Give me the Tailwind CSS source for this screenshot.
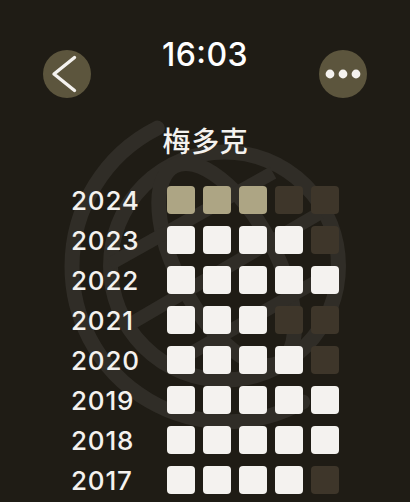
<!DOCTYPE html>
<html lang="zh-CN">

<head>
    <meta charset="UTF-8">
    <meta name="viewport" content="width=device-width, initial-scale=1.0">
    <title>梅多克</title>
    <script src="https://cdn.jsdelivr.net/npm/@tailwindcss/browser@4"></script>
</head>

<body class="bg-[#1f1c15]">
    <div class="relative h-[502px] w-[410px] overflow-hidden bg-[#1f1c15] font-[Inter,'Noto_Sans_CJK_SC',sans-serif] text-[#f4f2ef]">
        <!-- globe watermark -->
        <svg class="absolute inset-0" width="410" height="502" viewBox="0 0 410 502" fill="none" stroke="#302d27" stroke-width="15" stroke-linecap="round">
            <circle cx="224.5" cy="266" r="114" />
            <path d="M157.3 128.1A155 155 0 0 0 72 266.5A155 155 0 0 0 302.7 402" />
            <ellipse cx="226.7" cy="264.5" rx="49" ry="111.5" transform="rotate(-28 226.7 264.5)" />
            <path d="M110 264L273 172.6M131 323.6L320 213M165 368L332 272.5" stroke-width="13.3" stroke-linecap="butt" />
        </svg>

        <header class="relative flex justify-between px-[43px] pt-[50px]">
            <button class="size-12 rounded-full bg-[#5c553d]" aria-label="返回">
                <svg class="size-12" viewBox="0 0 48 48" fill="none" stroke="#f4f2ef" stroke-width="3.4" stroke-linecap="round" stroke-linejoin="round">
                    <path d="M31.5 7.5L11 24L31.5 40.5" />
                </svg>
            </button>
            <time class="-mt-3.5 text-[32px] leading-[38px] font-medium tracking-[0.4px] text-white">16<span class="inline-block -translate-y-[3px]">:</span>03</time>
            <button class="size-12 rounded-full bg-[#5c553d]" aria-label="更多">
                <svg class="size-12" viewBox="0 0 48 48" fill="#f4f2ef">
                    <circle cx="11" cy="24" r="4.4" />
                    <circle cx="24" cy="24" r="4.4" />
                    <circle cx="37" cy="24" r="4.4" />
                </svg>
            </button>
        </header>

        <h1 class="relative mt-6 pl-px text-center text-[28px] leading-10 font-medium tracking-[0.6px]">梅多克</h1>

        <ul id="ratings" class="relative mt-6 ml-[71px] space-y-3"></ul>
    </div>

    <script>
        const ratings = [
            { year: 2024, score: 3, current: true },
            { year: 2023, score: 4 },
            { year: 2022, score: 5 },
            { year: 2021, score: 3 },
            { year: 2020, score: 4 },
            { year: 2019, score: 5 },
            { year: 2018, score: 5 },
            { year: 2017, score: 4 }
        ];
        const list = document.getElementById('ratings');

        ratings.forEach(({ year, score, current }) => {
            const filled = current ? 'bg-[#ada584]' : 'bg-[#f4f2ef]';
            const li = document.createElement('li');
            li.className = 'flex h-7 items-center';

            const label = document.createElement('span');
            label.className = 'w-24 pt-0.5 text-[26px] leading-7 font-medium tracking-[0.8px]';
            label.textContent = year;
            li.appendChild(label);

            const boxes = document.createElement('div');
            boxes.className = 'flex gap-2';
            for (let i = 0; i < 5; i++) {
                const box = document.createElement('span');
                box.className = 'size-7 rounded ' + (i < score ? filled : 'bg-[#3e362a]');
                boxes.appendChild(box);
            }
            li.appendChild(boxes);
            list.appendChild(li);
        });
    </script>
</body>

</html>
